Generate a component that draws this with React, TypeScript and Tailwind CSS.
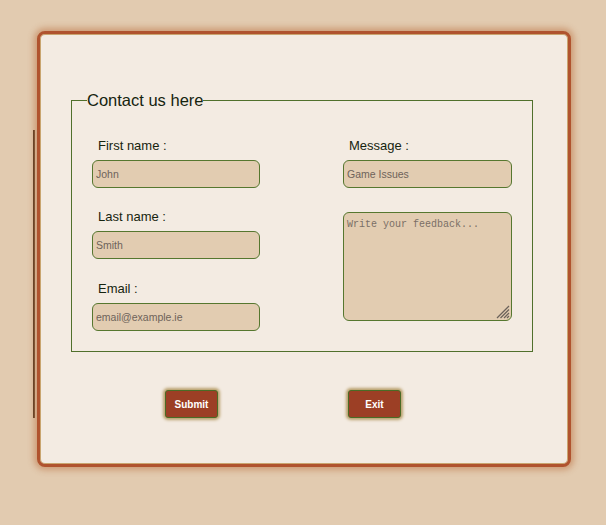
import React from "react";

export default function App() {
  const inputCls =
    "block w-[168px] h-[28px] rounded-[6px] border border-[#56772f] bg-[#e2ccb1] px-[3px] text-[10.5px] text-[#3a3028] placeholder:text-[#6e635a] outline-none [font-family:'Liberation_Sans',Arial,sans-serif]";
  const labelCls =
    "block h-[15px] leading-[15px] pl-[6px] mb-[7px] text-[13px] text-[#16240f]";
  return (
    <div className="min-h-[525px] w-full bg-[#e2cbb0] flex items-start pl-[33px] pt-[31px] [font-family:'Liberation_Sans',Arial,sans-serif]">
      <div className="w-[2px] h-[288px] mt-[99px] bg-gradient-to-r from-[#4e3520] to-[#7a5a3c]" />
      <div className="ml-[2px] w-[534px] h-[436px] rounded-[8px] border-[3px] border-[#b0532e] bg-[#f3ebe2] shadow-[0_0_6px_3px_rgba(180,95,45,0.45),inset_0_0_0_1px_#c9a56f] flex flex-col pl-[31px] pt-[57px]">
        <fieldset className="w-[462px] border border-[#50702c] pl-[20px] pr-[20px] pt-[28px] pb-[20px]">
          <legend className="-ml-[5px] px-0 text-[16.5px] leading-[19px] text-[#16240f]">
            Contact us here
          </legend>
          <div className="flex gap-[83px]">
            <div className="flex flex-col">
              <div>
                <label className={labelCls}>First name :</label>
                <input className={inputCls} placeholder="John" />
              </div>
              <div className="mt-[21px]">
                <label className={labelCls}>Last name :</label>
                <input className={inputCls} placeholder="Smith" />
              </div>
              <div className="mt-[22px]">
                <label className={labelCls}>Email :</label>
                <input className={inputCls} placeholder="email@example.ie" />
              </div>
            </div>
            <div className="flex flex-col">
              <div>
                <label className={labelCls}>Message :</label>
                <input className={inputCls + " w-[169px]"} placeholder="Game Issues" />
              </div>
              <div className="relative mt-[24px] w-[169px] h-[109px]">
                <textarea
                  className="block w-[169px] h-[109px] resize-none rounded-[6px] border border-[#56772f] bg-[#e2ccb1] px-[3px] pt-[6px] pb-[2px] text-[10px] leading-[12px] text-[#3a3028] placeholder:text-[#7a6f66] outline-none [font-family:'Liberation_Mono','Courier_New',monospace]"
                  placeholder="Write your feedback..."
                />
                <svg
                  className="absolute right-[2px] bottom-[2px] pointer-events-none"
                  width="14"
                  height="14"
                  viewBox="0 0 14 14"
                >
                  <g stroke="#6b625a" strokeWidth="1.2">
                    <line x1="13" y1="1" x2="1" y2="13" />
                    <line x1="13" y1="4.5" x2="4.5" y2="13" />
                    <line x1="13" y1="8" x2="8" y2="13" />
                    <line x1="13" y1="11" x2="11" y2="13" />
                  </g>
                </svg>
              </div>
            </div>
          </div>
        </fieldset>
        <div className="flex gap-[130px] pl-[94px] mt-[38px]">
          <button className="w-[53px] h-[28px] rounded-[3px] border border-[#4a6b25] bg-[#9c3f25] text-white font-bold text-[10px] shadow-[0_0_3px_2px_#b9a06c]">
            Submit
          </button>
          <button className="w-[53px] h-[28px] rounded-[3px] border border-[#4a6b25] bg-[#9c3f25] text-white font-bold text-[10px] shadow-[0_0_3px_2px_#b9a06c]">
            Exit
          </button>
        </div>
      </div>
    </div>
  );
}
